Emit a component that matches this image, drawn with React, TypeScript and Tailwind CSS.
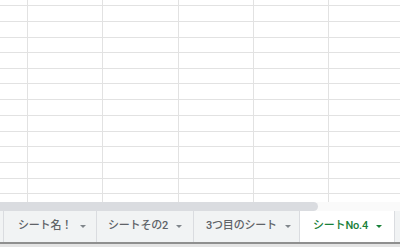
import React from 'react'

const rowHeights = [
  'h-[6px]', 'h-[16px]', 'h-[16px]', 'h-[15px]', 'h-[16px]', 'h-[15px]', 'h-[16px]',
  'h-[16px]', 'h-[16px]', 'h-[15px]', 'h-[16px]', 'h-[16px]', 'h-[15px]', 'h-[8px]',
]
const colWidths = ['w-[28px]', 'w-[75px]', 'w-[76px]', 'w-[75px]', 'w-[75px]', 'flex-1']

const sheets = [
  { name: 'シート名！', cls: 'w-[92px] pl-[14px]' },
  { name: 'シートその2', cls: 'w-[96px] pl-[11px]' },
  { name: '3つ目のシート', cls: 'w-[105px] pl-[12px]' },
  { name: 'シートNo.4', cls: 'w-[94px] pl-[13px]', active: true },
]

function Caret({ color }: { color: string }) {
  return (
    <svg width="6" height="3" viewBox="0 0 6 3" className="shrink-0">
      <path d="M0 0h6L3 3z" fill={color} />
    </svg>
  )
}

export default function App() {
  return (
    <div className="w-[400px] h-[247px] overflow-hidden bg-white flex flex-col font-['Roboto','Noto_Sans_CJK_JP',sans-serif]">
      {/* grid */}
      <div className="flex flex-col">
        {rowHeights.map((h, r) => (
          <div key={r} className={`flex ${h} ${r < rowHeights.length - 1 ? 'border-b border-[#e2e2e2]' : ''}`}>
            {colWidths.map((w, c) => (
              <div key={c} className={`${w} h-full ${c < colWidths.length - 1 ? 'border-r border-[#e2e2e2]' : ''}`} />
            ))}
          </div>
        ))}
      </div>

      {/* horizontal scrollbar */}
      <div className="h-[9px] flex bg-[#fafafa]">
        <div className="w-[318px] h-full bg-[#dadce0] rounded-r-[5px]" />
      </div>

      {/* sheet tabs */}
      <div className="h-[31px] bg-[#f1f3f4] flex items-stretch pl-[3px]">
        <div className="w-px shrink-0 bg-[#dadce0]" />
        {sheets.map((s, i) => (
          <React.Fragment key={i}>
            <div
              className={`shrink-0 flex items-center gap-[8px] whitespace-nowrap ${s.cls} text-[11px] font-medium tracking-[-0.2px] ${
                s.active ? 'bg-white text-[#188038]' : 'text-[#5f6368]'
              }`}
            >
              <span>{s.name}</span>
              <Caret color={s.active ? '#188038' : '#80868b'} />
            </div>
            <div className="w-px shrink-0 bg-[#dadce0]" />
          </React.Fragment>
        ))}
      </div>

      {/* bottom edge */}
      <div className="h-[2px] bg-[#8f8f8f]" />
      <div className="flex-1 bg-[#e4e4e4]" />
    </div>
  )
}
